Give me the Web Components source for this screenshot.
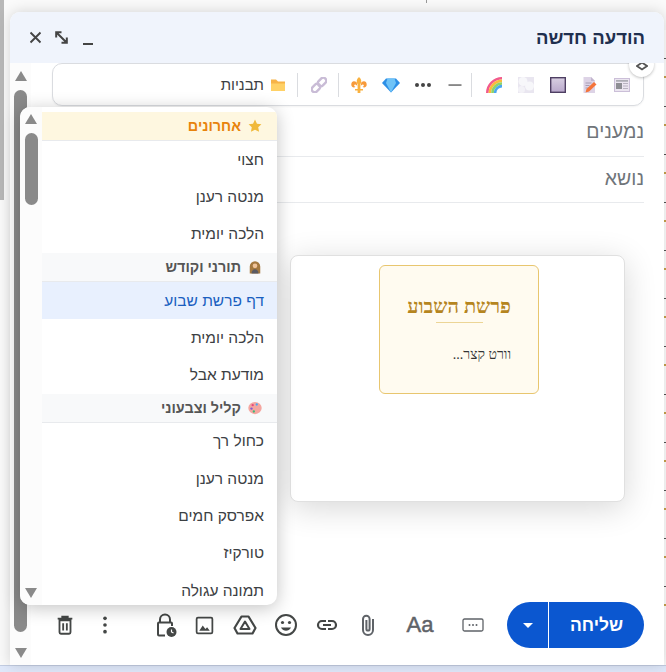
<!DOCTYPE html>
<html lang="he">
<head>
<meta charset="utf-8">
<style>
  html, body { margin: 0; height: 100%; overflow: hidden; }
  body { width: 666px; height: 672px; background: #fff; font-family: "Liberation Sans", sans-serif; }
</style>
</head>
<body>
<compose-window></compose-window>
<script>
// footer and title bar icons, all on a 24 box
const ICONS = {
  close: '<path d="M4 4l16 16M20 4L4 20" stroke="#444" stroke-width="3" fill="none"/>',
  expand: '<path d="M3.500 12V3.500H12M3.500 3.500l17 17M12 20.500h8.500V12" fill="none" stroke="#444" stroke-width="3.200"/>',
  trash: '<path d="M6 7h12v13a1.500 1.500 0 0 1-1.500 1.500h-9A1.500 1.500 0 0 1 6 20zM4 5h16M9 5V3h6v2M10 10v8M14 10v8" fill="none" stroke="#444746" stroke-width="2"/>',
  dots: '<circle cx="12" cy="4" r="2.200" fill="#444746"/><circle cx="12" cy="12" r="2.200" fill="#444746"/><circle cx="12" cy="20" r="2.200" fill="#444746"/>',
  lock: '<path d="M7 9V6.500a5 5 0 0 1 10 0V9" fill="none" stroke="#444746" stroke-width="2"/><path d="M12 22.500H6a1 1 0 0 1-1-1V10.500a1 1 0 0 1 1-1h12a1 1 0 0 1 1 1V13" fill="none" stroke="#444746" stroke-width="2"/><circle cx="18.500" cy="19" r="5" fill="#444746"/><path d="M18.500 16.500V19l2 1" stroke="#fff" stroke-width="1.200" fill="none"/>',
  image: '<rect x="3" y="3" width="18" height="18" rx="1.500" fill="none" stroke="#444746" stroke-width="2"/><path d="M6 18l4-6 3 4 2-2 3 4z" fill="#444746"/>',
  drive: '<path d="M8.500 3.500h7L22.500 15l-3 5.500h-15L1.500 15z" fill="none" stroke="#444746" stroke-width="2.200" stroke-linejoin="round"/><path d="M12 8.500L16.500 16h-9z" fill="none" stroke="#444746" stroke-width="2" stroke-linejoin="round"/>',
  smile: '<circle cx="12" cy="12" r="10" fill="none" stroke="#444746" stroke-width="2"/><circle cx="8.500" cy="9.500" r="1.600" fill="#444746"/><circle cx="15.500" cy="9.500" r="1.600" fill="#444746"/><path d="M7 14.500c1.200 2.400 3 3.300 5 3.300s3.800-.9 5-3.300z" fill="#444746"/>',
  link: '<path d="M11 8H7a4 4 0 0 0 0 8h4M13 8h4a4 4 0 0 1 0 8h-4M8 12h8" fill="none" stroke="#444746" stroke-width="2.200"/>',
  clip: '<path d="M17 6v11a5 5 0 0 1-10 0V6a3.300 3.300 0 0 1 6.600 0v10a1.600 1.600 0 0 1-3.200 0V7" fill="none" stroke="#5f6368" stroke-width="2"/>',
  more: '<rect x="2" y="6" width="20" height="12" rx="1.500" fill="none" stroke="#5f6368" stroke-width="1.300"/><circle cx="8.500" cy="12" r="1" fill="#5f6368"/><circle cx="12" cy="12" r="1" fill="#5f6368"/><circle cx="15.500" cy="12" r="1" fill="#5f6368"/>'
};

class ToolIcon extends HTMLElement {
  constructor() {
    super();
    this.attachShadow({mode: 'open'}).innerHTML = `
      <style>
        :host { display: inline-flex; flex: none; width: var(--s, 24px); height: var(--s, 24px); }
        svg { width: 100%; height: 100%; display: block; }
      </style>
      <svg viewBox="0 0 24 24">${ICONS[this.getAttribute('name')] || ''}</svg>`;
  }
}
customElements.define('tool-icon', ToolIcon);

// the grey native looking scroller with its two arrows
class ArrowScroller extends HTMLElement {
  constructor() {
    super();
    const thumb = this.getAttribute('thumb') || '72';
    this.attachShadow({mode: 'open'}).innerHTML = `
      <style>
        :host { display: flex; flex-direction: column; align-items: center; box-sizing: border-box; padding: 7px 0; background: #fcfcfc; }
        i { display: block; flex: none; width: 0; height: 0; border-left: 6.500px solid transparent; border-right: 6.500px solid transparent; }
        .up { border-bottom: 10px solid #8a8a8a; }
        .down { border-top: 10px solid #8a8a8a; }
        .track { flex: 1; width: 100%; display: flex; justify-content: center; align-items: flex-start; padding-top: 9px; }
        .thumb { width: 13px; height: ${thumb}px; background: #8a8a8a; border-radius: 7px; }
      </style>
      <i class="up"></i>
      <div class="track"><div class="thumb"></div></div>
      <i class="down"></i>`;
  }
}
customElements.define('arrow-scroller', ArrowScroller);

class EmojiBar extends HTMLElement {
  constructor() {
    super();
    this.attachShadow({mode: 'open'}).innerHTML = `
      <style>
        :host { display: flex; align-items: center; flex: none; box-sizing: border-box; height: 43px; border: 1px solid #dadce0; border-radius: 10px; background: #fff; padding-right: 5px; box-shadow: 0 1px 2px rgba(0,0,0,.05); }
        .b { width: 32px; flex: none; display: flex; justify-content: center; }
        .sep { width: 1px; height: 24px; flex: none; background: #dadce0; }
        .tpl { display: flex; align-items: center; gap: 6px; padding-right: 11px; font: 15px "Liberation Sans", sans-serif; color: #3c4043; }
        svg { width: 16px; height: 16px; display: block; }
        svg.wide { width: 18px; }
      </style>
      <div class="b"><svg viewBox="0 0 16 16"><rect x=".5" y="1.500" width="15" height="13" fill="#ebe5f0" stroke="#cbbfd8"/><rect x="2" y="6" width="6" height="6" fill="#8e8e94"/><rect x="2" y="3.200" width="12" height="1.400" fill="#9e9ea6"/><rect x="9" y="6" width="5" height="1" fill="#b8b2c0"/><rect x="9" y="8.500" width="5" height="1" fill="#b8b2c0"/><rect x="9" y="11" width="5" height="1" fill="#b8b2c0"/></svg></div>
      <div class="b"><svg viewBox="0 0 16 16"><path d="M1.500 0H9l4 4v12H1.500z" fill="#ddd3e6"/><path d="M9 0l4 4H9z" fill="#c2b5ce"/><path d="M3.500 6h6M3.500 8.500h4M3.500 11h3" stroke="#a79cb4"/><path d="M3.500 15.500l1-3.500L12 5l2.500 2.500L7 14.500z" fill="#f4743b"/></svg></div>
      <div class="b"><svg viewBox="0 0 16 16"><defs><linearGradient id="sq" x1="0" y1="0" x2="0" y2="1"><stop offset="0" stop-color="#d8cfe2"/><stop offset="1" stop-color="#b9a8cc"/></linearGradient></defs><rect x=".7" y=".7" width="14.600" height="14.600" fill="url(#sq)" stroke="#4e3f63" stroke-width="1.400"/></svg></div>
      <div class="b"><svg viewBox="0 0 16 16"><rect width="16" height="16" fill="#e9e6f0"/><circle cx="5" cy="4.500" r="4.500" fill="#f7f7fa"/><circle cx="11.500" cy="9" r="4.500" fill="#f7f7fa"/><circle cx="3.500" cy="12.500" r="3.500" fill="#f3f2f7"/></svg></div>
      <div class="b"><svg viewBox="0 0 16 16"><path d="M0 16A16 16 0 0 1 16 0v2.600A13.400 13.400 0 0 0 2.600 16z" fill="#f25a8c"/><path d="M2.600 16A13.400 13.400 0 0 1 16 2.600v2.600A10.800 10.800 0 0 0 5.200 16z" fill="#fbbc3c"/><path d="M5.200 16A10.800 10.800 0 0 1 16 5.200v2.600A8.200 8.200 0 0 0 7.800 16z" fill="#8ed36a"/><path d="M7.800 16A8.200 8.200 0 0 1 16 7.800v2.600A5.600 5.600 0 0 0 10.400 16z" fill="#4aa8ef"/></svg></div>
      <div class="sep" style="margin-right:6px"></div>
      <div class="b"><svg viewBox="0 0 16 16"><rect x="1.500" y="7.400" width="13" height="1.300" fill="#555"/></svg></div>
      <div class="b"><svg class="wide" viewBox="0 0 18 16"><circle cx="3" cy="8" r="2" fill="#444"/><circle cx="9" cy="8" r="2" fill="#444"/><circle cx="15" cy="8" r="2" fill="#444"/></svg></div>
      <div class="b"><svg class="wide" viewBox="0 0 18 16"><path d="M4 1.500h10l4 4.500-9 9.500L0 6z" fill="#2d8fe6"/><path d="M5.500 1.500h7L14 6l-5 9.500L4 6z" fill="#6fc3f7"/></svg></div>
      <div class="b"><svg viewBox="0 0 16 16"><path d="M8 0c2.800 2.400 2.800 5 1.400 7.500V12H12v1.500H9.400V16H6.600v-2.500H4V12h2.600V7.500C5.200 5 5.200 2.400 8 0z" fill="#f9b13f"/><path d="M5.800 5.500C3 3 0 4.500 .3 8c.2 2.200 2.800 3.400 4.200 1.700-1.200 0-1.800-1.300-.9-1.900 1-.6 2.100.3 2.600 1.400zM10.200 5.500C13 3 16 4.500 15.700 8c-.2 2.200-2.800 3.400-4.200 1.700 1.200 0 1.800-1.300.9-1.900-1-.6-2.100.3-2.600 1.400z" fill="#f79a3a"/></svg></div>
      <div class="sep" style="margin:0 4px 0 3px"></div>
      <div class="b"><svg viewBox="0 0 16 16"><g transform="rotate(-45 8 8)" fill="none" stroke="#c9bcd6" stroke-width="2.400"><rect x="-1" y="5" width="9.500" height="6" rx="3"/><rect x="7.500" y="5" width="9.500" height="6" rx="3"/></g></svg></div>
      <div class="sep" style="margin-right:5px"></div>
      <div class="tpl">
        <svg viewBox="0 0 16 16"><path d="M1 2.500h5l2 2h7V14H1z" fill="#f7b347"/><path d="M1 6.500h14V14H1z" fill="#ffd166"/></svg>
        <span>תבניות</span>
      </div>`;
  }
}
customElements.define('emoji-bar', EmojiBar);

class MenuHeader extends HTMLElement {
  constructor() {
    super();
    this.attachShadow({mode: 'open'}).innerHTML = `
      <style>
        :host { display: flex; align-items: center; gap: 7px; height: 29px; box-sizing: border-box; padding: 0 15px; background: #f8f9fa; border-bottom: 1px solid #e8eaed; font: bold 14.400px "Liberation Sans", sans-serif; color: #555; }
        :host([recent]) { background: #fef7e0; color: #e8830c; }
        ::slotted(svg) { width: 14px; height: 14px; display: block; flex: none; }
      </style>
      <slot name="icon"></slot><span><slot></slot></span>`;
  }
}
customElements.define('menu-header', MenuHeader);

class MenuItem extends HTMLElement {
  constructor() {
    super();
    this.attachShadow({mode: 'open'}).innerHTML = `
      <style>
        :host { display: flex; align-items: center; height: 37.300px; box-sizing: border-box; padding: 0 13px; font: 15.500px "Liberation Sans", sans-serif; color: #3c4043; }
        :host([active]) { background: #e8f0fe; color: #1a5fc0; }
      </style>
      <slot></slot>`;
  }
}
customElements.define('menu-item', MenuItem);

class TemplateMenu extends HTMLElement {
  constructor() {
    super();
    this.attachShadow({mode: 'open'}).innerHTML = `
      <style>
        :host { position: absolute; left: 20px; top: 107px; width: 257px; height: 498px; display: flex; direction: ltr; background: #fff; border-radius: 10px; overflow: hidden; box-shadow: 0 3px 18px rgba(0,0,0,.24); }
        arrow-scroller { width: 22px; flex: none; }
        .list { flex: 1; direction: rtl; padding-top: 5px; overflow: hidden; }
      </style>
      <arrow-scroller thumb="72"></arrow-scroller>
      <div class="list"><slot></slot></div>`;
  }
}
customElements.define('template-menu', TemplateMenu);

class PreviewCard extends HTMLElement {
  constructor() {
    super();
    this.attachShadow({mode: 'open'}).innerHTML = `
      <style>
        :host { position: absolute; left: 290px; top: 255px; width: 335px; height: 247px; box-sizing: border-box; background: #fff; border: 1px solid #e0e0e0; border-radius: 8px; box-shadow: 0 6px 32px rgba(0,0,0,.16); display: flex; padding: 9px 0 0 88px; direction: ltr; }
        .card { width: 160px; height: 129px; box-sizing: border-box; background: #fffbf0; border: 1px solid #e8c66f; border-radius: 6px; padding: 30px 27px 0; direction: rtl; font-family: "Liberation Serif", serif; }
        h2 { margin: 0; font-size: 20px; line-height: 20px; color: #b5851f; text-align: right; white-space: nowrap; }
        hr { width: 47px; height: 1px; border: 0; background: #ecd596; margin: 6px auto 0; }
        p { margin: 24px 0 0; font-size: 14px; color: #333; }
      </style>
      <div class="card">
        <h2>פרשת השבוע</h2>
        <hr>
        <p>וורט קצר...</p>
      </div>`;
  }
}
customElements.define('preview-card', PreviewCard);

class ComposeFooter extends HTMLElement {
  constructor() {
    super();
    this.attachShadow({mode: 'open'}).innerHTML = `
      <style>
        :host { display: flex; align-items: center; flex: none; height: 46px; direction: ltr; }
        .aa { font: 22px "Liberation Sans", sans-serif; color: #5f6368; -webkit-text-stroke: .5px #5f6368; margin-left: 27px; }
        .send { margin-left: auto; display: flex; height: 46px; color: #fff; }
        .arrow { width: 42px; box-sizing: border-box; background: #0b57d0; border-radius: 23px 0 0 23px; display: flex; align-items: center; justify-content: center; border-right: 1px solid #fff; }
        .arrow i { width: 0; height: 0; border-left: 5px solid transparent; border-right: 5px solid transparent; border-top: 5px solid #fff; }
        .label { width: 95px; box-sizing: border-box; background: #0b57d0; border-radius: 0 23px 23px 0; display: flex; align-items: center; justify-content: center; font: bold 17.500px "Liberation Sans", sans-serif; }
      </style>
      <tool-icon name="trash" style="--s:22px;margin-left:4.500px"></tool-icon>
      <tool-icon name="dots" style="--s:20px;margin-left:19.500px"></tool-icon>
      <tool-icon name="lock" style="margin-left:38px"></tool-icon>
      <tool-icon name="image" style="--s:21px;margin-left:17px"></tool-icon>
      <tool-icon name="drive" style="margin-left:18px"></tool-icon>
      <tool-icon name="smile" style="margin-left:17px"></tool-icon>
      <tool-icon name="link" style="margin-left:16.500px"></tool-icon>
      <tool-icon name="clip" style="margin-left:17px"></tool-icon>
      <span class="aa">Aa</span>
      <tool-icon name="more" style="margin-left:27.500px"></tool-icon>
      <div class="send">
        <div class="arrow"><i></i></div>
        <div class="label">שליחה</div>
      </div>`;
  }
}
customElements.define('compose-footer', ComposeFooter);

class ComposeWindow extends HTMLElement {
  constructor() {
    super();
    this.attachShadow({mode: 'open'}).innerHTML = `
      <style>
        :host { display: block; position: relative; width: 666px; height: 672px; background: #fafafa; overflow: hidden; direction: rtl; }
        .leftbar { position: absolute; left: 0; top: 0; width: 4px; height: 200px; background: #b8b8b8; }
        .tick { position: absolute; left: 426px; top: 0; width: 1px; height: 3px; background: #999; }
        .ground { position: absolute; left: 0; right: 0; top: 665px; height: 7px; background: #dfe8fa; border-top: 1px solid #c3cde2; }
        .ticks { position: absolute; right: 0; top: 30px; width: 2px; height: 600px; background: repeating-linear-gradient(#fff 0 28px, #555 28px 29px, #fff 29px 46px, #c9a24e 46px 48px); }
        .win { position: absolute; left: 10px; top: 12px; width: 654px; height: 653px; background: #fff; border-radius: 10px 10px 0 0; box-shadow: 0 0 14px rgba(0,0,0,.16); display: flex; flex-direction: column; overflow: hidden; }
        .head { position: relative; z-index: 2; height: 51px; flex: none; background: #f0f4fc; display: flex; align-items: center; justify-content: space-between; padding: 0 19px 0 18px; box-sizing: border-box; }
        .title { font: bold 18.500px "Liberation Sans", sans-serif; color: #1f2f4f; }
        .ctrl { display: flex; align-items: center; direction: ltr; --s: 15px; }
        .min { width: 10px; height: 2px; background: #444; margin: 12px 0 0 14px; }
        .body { flex: 1; display: flex; direction: ltr; min-height: 0; }
        #outer { width: 21px; flex: none; padding: 8px 0 7px; }
        .main { flex: 1; direction: rtl; padding: 0 20px 0 18px; display: flex; flex-direction: column; min-width: 0; }
        emoji-bar { margin: 0 0 0 3px; }
        .field { height: 46px; flex: none; box-sizing: border-box; padding-bottom: 3px; border-bottom: 1px solid #e8eaed; display: flex; align-items: center; font: 19.500px "Liberation Sans", sans-serif; color: #70757a; }
        .field.first { height: 51px; padding-top: 4px; }
        .spacer { flex: 1; }
        compose-footer { margin: 0 0 17px; }
        .pin { position: absolute; z-index: 1; left: 619px; top: 40px; width: 25px; height: 25px; background: #fff; border-radius: 50%; box-shadow: 0 1px 3px rgba(0,0,0,.25); display: flex; align-items: center; justify-content: center; }
        .pin svg { width: 12px; height: 12px; display: block; margin-top: 3px; }
      </style>
      <div class="leftbar"></div>
      <div class="tick"></div>
      <div class="ticks"></div>
      <div class="ground"></div>
      <div class="win">
        <div class="head">
          <div class="title">הודעה חדשה</div>
          <div class="ctrl">
            <tool-icon name="close"></tool-icon>
            <tool-icon name="expand" style="margin-left:11px"></tool-icon>
            <span class="min"></span>
          </div>
        </div>
        <div class="pin"><svg viewBox="0 0 12 12"><path d="M1 6L6 2.500 11 6 6 9.500z" fill="none" stroke="#555" stroke-width="1.800"/></svg></div>
        <div class="body">
          <arrow-scroller id="outer" thumb="542"></arrow-scroller>
          <div class="main">
            <emoji-bar></emoji-bar>
            <div class="field first">נמענים</div>
            <div class="field">נושא</div>
            <div class="spacer"></div>
            <compose-footer></compose-footer>
          </div>
        </div>
      </div>
      <preview-card></preview-card>
      <template-menu>
        <menu-header recent><svg slot="icon" viewBox="0 0 24 24"><path d="M12 1l3.400 7 7.600 1-5.500 5.300L19 22l-7-3.700L5 22l1.500-7.700L1 9l7.600-1z" fill="#f0b93a"/></svg>אחרונים</menu-header>
        <menu-item>חצוי</menu-item>
        <menu-item>מנטה רענן</menu-item>
        <menu-item>הלכה יומית</menu-item>
        <menu-header><svg slot="icon" viewBox="0 0 24 24"><path d="M3 23V11a9 9 0 0 1 18 0v12z" fill="#a5793f"/><circle cx="12" cy="10" r="4" fill="#f0c49a"/><path d="M6 23c0-4 2.500-7 6-7s6 3 6 7z" fill="#5a5a62"/></svg>תורני וקודש</menu-header>
        <menu-item active>דף פרשת שבוע</menu-item>
        <menu-item>הלכה יומית</menu-item>
        <menu-item>מודעת אבל</menu-item>
        <menu-header><svg slot="icon" viewBox="0 0 24 24"><ellipse cx="12" cy="12" rx="11.500" ry="10.500" fill="#f4a6a0"/><circle cx="8" cy="7" r="2" fill="#e5487d"/><circle cx="15" cy="6" r="2" fill="#4aa8ef"/><circle cx="6" cy="13" r="2" fill="#7c5cd6"/><circle cx="10" cy="18" r="2" fill="#3cb878"/></svg>קליל וצבעוני</menu-header>
        <menu-item>כחול רך</menu-item>
        <menu-item>מנטה רענן</menu-item>
        <menu-item>אפרסק חמים</menu-item>
        <menu-item>טורקיז</menu-item>
        <menu-item>תמונה עגולה</menu-item>
      </template-menu>`;
  }
}
customElements.define('compose-window', ComposeWindow);
</script>
</body>
</html>
